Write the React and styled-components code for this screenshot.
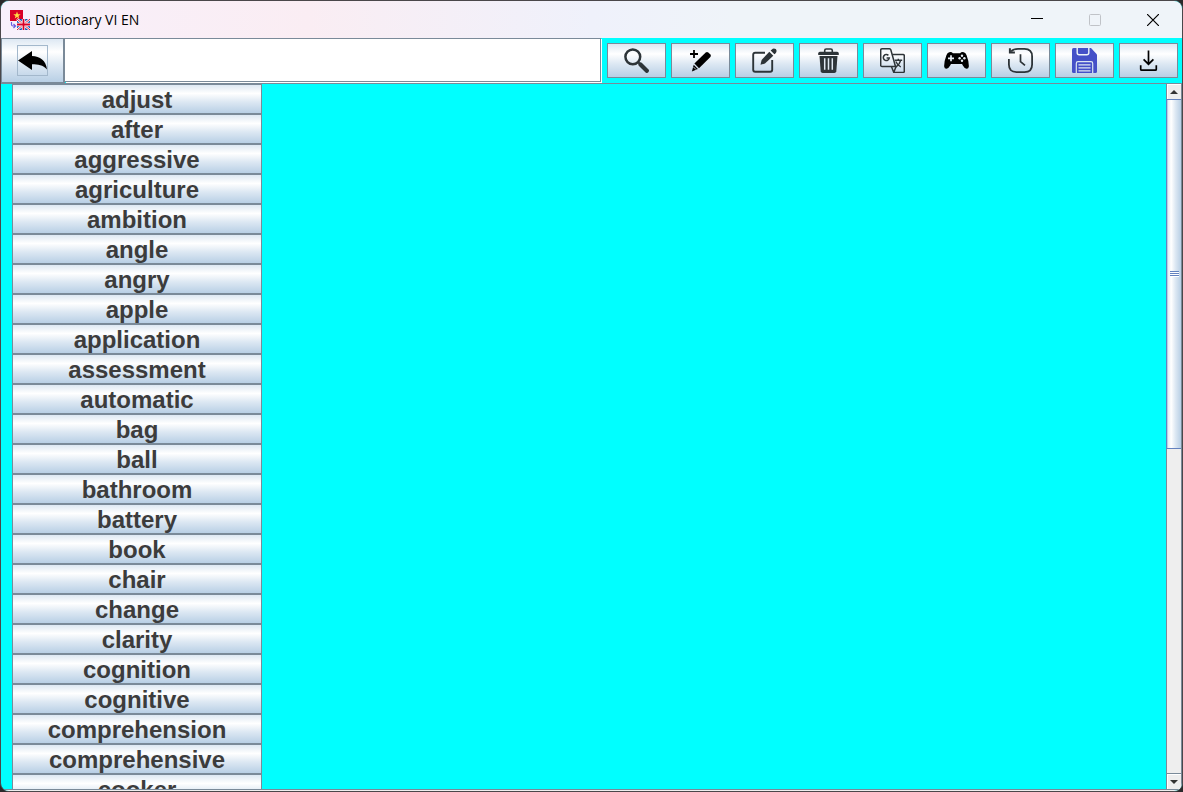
import React from "react";
import styled, { createGlobalStyle } from "styled-components";

const line = "#7a8a99";
const metal =
  "linear-gradient(#dde8f3 0%, #ffffff 30%, #dde8f3 60%, #b8cfe5 100%)";

const GlobalStyle = createGlobalStyle`
  *, *::before, *::after { box-sizing: border-box; }
  body { margin: 0; background: #2b2a2b; }
`;

const Window = styled.div`
  display: flex;
  flex-direction: column;
  height: 100vh;
  border: 1px solid #4a474a;
  border-radius: 9px;
  overflow: hidden;
  background: #00ffff;
  font-family: "Liberation Sans", Arial, sans-serif;
`;

const TitleBar = styled.header`
  display: flex;
  align-items: center;
  flex: none;
  height: 37px;
  padding-left: 9px;
  background: linear-gradient(90deg, #f8f0fb 0%, #faedf3 26%, #eff1fb 50%, #eff4f9 62%);
`;

const Title = styled.h1`
  flex: 1;
  margin: 0 0 0 5px;
  font: 400 14px/20px "Open Sans", "Noto Sans", sans-serif;
  color: #000;
`;

const WindowButton = styled.button`
  display: flex;
  align-items: center;
  justify-content: center;
  width: 58px;
  height: 37px;
  padding: 0;
  border: 0;
  background: none;
`;

const Toolbar = styled.div`
  display: flex;
  flex: none;
  height: 46px;
  border-bottom: 1px solid ${line};
`;

const BackButton = styled.button`
  display: flex;
  align-items: center;
  justify-content: center;
  flex: none;
  width: 64px;
  padding: 0;
  border: 1px solid ${line};
  border-right-width: 2px;
  background: ${metal};
`;

const FocusFrame = styled.span`
  display: flex;
  width: 31px;
  height: 31px;
  border: 1px solid #a3b8cc;
`;

const SearchInput = styled.input`
  flex: 1;
  min-width: 0;
  height: 44px;
  padding: 0 4px;
  border: 1px solid ${line};
  border-left: 0;
  outline: 0;
  background: #fff;
  box-shadow: 1px 1px #fff;
  font: 400 24px/28px "Liberation Sans", Arial, sans-serif;
`;

const Tools = styled.div`
  display: flex;
  flex: none;
  gap: 5px;
  padding: 5px 4px 5px 6px;
`;

const ToolButton = styled.button`
  display: flex;
  align-items: center;
  justify-content: center;
  width: 59px;
  height: 35px;
  padding: 0;
  border: 1px solid ${line};
  background: ${metal};
`;

const Content = styled.main`
  display: flex;
  flex: 1;
  min-height: 0;
  border-bottom: 1px solid #eee;
`;

const Viewport = styled.div`
  flex: 1;
  min-width: 0;
  overflow: hidden;
  padding-left: 11px;
  border-bottom: 1px solid ${line};
`;

const WordList = styled.ul`
  width: 250px;
  margin: 0;
  padding: 0;
  list-style: none;
`;

const WordButton = styled.button`
  display: block;
  width: 100%;
  height: 30px;
  padding: 2px 0 0;
  border: 1px solid ${line};
  background: ${metal};
  color: #3c3c3c;
  font: 700 24px/26px "Liberation Sans", Arial, sans-serif;
  text-align: center;
`;

const ScrollBar = styled.div`
  display: flex;
  flex-direction: column;
  flex: none;
  width: 16px;
  border: 1px solid ${line};
  border-top: 0;
  background: #eee;
`;

const ScrollArrow = styled.button`
  display: flex;
  align-items: center;
  justify-content: center;
  flex: none;
  height: ${(p) => (p.$down ? 16 : 15)}px;
  padding: 0;
  border: 0;
  border-top: ${(p) => (p.$down ? `1px solid ${line}` : "0")};
  background: #eee;
  box-shadow: inset 1px 1px #fff;
`;

const Track = styled.div`
  flex: 1;
  min-height: 0;
`;

const Thumb = styled.div`
  display: flex;
  align-items: center;
  justify-content: center;
  height: ${(p) => p.$size}%;
  border-top: 1px solid #6382bf;
  border-bottom: 1px solid #6382bf;
  box-shadow: -1px 0 #6382bf, inset 1px 0 #b8cfe5;
  background: linear-gradient(90deg, #dde8f3 0%, #ffffff 30%, #dde8f3 60%, #b8cfe5 100%);
`;

const Icon = ({ size = 25, children }) => (
  <svg width={size} height={size} viewBox={`0 0 ${size} ${size}`} fill="none" aria-hidden="true">
    {children}
  </svg>
);

const ink = "#2d3438";

const AppIcon = () => (
  <svg width="20" height="20" viewBox="0 0 20 20" aria-hidden="true">
    <rect width="13" height="11" fill="#d80027" />
    <path d="M7 1.600l1 2.600h2.700L8.500 5.900l.8 2.600L7 6.900 4.700 8.500l.8-2.600L3.300 4.200H6z" fill="#ffda44" />
    <path d="M1.500 12v2.500q0 1.500 1.500 1.500h2M3.500 14l2 2-2 2" fill="none" stroke="#6a5be0" strokeWidth="1.200" />
    <rect x="7" y="9" width="13" height="11" fill="#0052b4" />
    <path d="M7 9l13 11M20 9L7 20" stroke="#fff" strokeWidth="2.400" />
    <path d="M7 9l13 11M20 9L7 20" stroke="#d80027" strokeWidth=".9" />
    <path d="M13.500 9v11M7 14.500h13" stroke="#fff" strokeWidth="3.400" />
    <path d="M13.500 9v11M7 14.500h13" stroke="#d80027" strokeWidth="1.800" />
  </svg>
);

const BackIcon = () => (
  <svg width="29" height="29" viewBox="1 1 29 29" aria-hidden="true">
    <path d="M1 15.500L15 6v5c8 .5 14 4 15 13.500C26 20 21 19.300 15 19.300V25z" fill="#000" />
  </svg>
);

const SearchIcon = () => (
  <Icon>
    <circle cx="8.800" cy="8.800" r="7.400" stroke={ink} strokeWidth="2.500" />
    <path d="M14 14l3 3" stroke={ink} strokeWidth="2" />
    <path d="M16.500 16.500l6.300 6.300" stroke={ink} strokeWidth="4.200" strokeLinecap="round" />
  </Icon>
);

const AddIcon = () => (
  <Icon>
    <path d="M6 2v8M2 6h8" stroke="#000" strokeWidth="1.800" />
    <path d="M17.700 4.400q1.300-1 2.600 0l2.100 2.100q1 1.300 0 2.500L11 20.300l-4.600-4.700z" fill="#000" />
    <path d="M5.700 16.800l4.200 4.200-6 2.500z" fill="#000" />
    <path d="M5.500 19l2.600 2.600" stroke="#e4edf6" strokeWidth=".8" />
  </Icon>
);

const EditIcon = () => (
  <Icon>
    <path d="M13 4.700H3.200Q1.200 4.700 1.200 6.700v15q0 2 2 2h15q2 0 2-2V12" stroke={ink} strokeWidth="1.900" />
    <path d="M17.300 3.700l4 4-8.300 7.900-4.500 1.200 1.100-4.900z" fill={ink} />
    <path d="M19.600 1.700q2-2.200 4.200-.6 1.700 2.200-.4 4.300l-1 .9-3.800-3.700z" fill={ink} />
  </Icon>
);

const TrashIcon = () => (
  <Icon>
    <path d="M8.700 4.500V2.500Q8.700 1 10.200 1h4.600q1.500 0 1.500 1.500v2" stroke={ink} strokeWidth="1.600" />
    <path d="M2.200 7V5.500q0-1.700 1.700-1.700h17.200q1.700 0 1.700 1.700V7z" fill={ink} />
    <path d="M3.500 8h18l-1.200 15.200q-.2 1.800-2 1.800H6.700q-1.800 0-2-1.800z" fill={ink} />
    <path d="M8.700 10.300v11.500M12.500 10.300v11.500M16.300 10.300v11.500" stroke="#dfe8f1" strokeWidth="1.500" />
  </Icon>
);

const TranslateIcon = () => (
  <Icon>
    <path d="M2 .8h7.500q1 0 1.300 1l4.700 16.700H2q-1.300 0-1.300-1.300V2Q.7.800 2 .8z" stroke={ink} strokeWidth="1.500" />
    <path d="M12.300 6.500H23q1.300 0 1.300 1.300v15.400q0 1.300-1.300 1.300h-9.200l-2.300-5.700M13.800 24.300l2.200-5.500" stroke={ink} strokeWidth="1.500" />
    <path d="M8.400 7.400A3 3 0 1 0 9.300 10H6.600" stroke={ink} strokeWidth="1.500" />
    <path d="M14.700 12.200h7.500M18.300 10.700v1.500M20.700 12.200q-1 4.200-4.700 6.600M15.800 13.500q1.500 3.500 5 5.500" stroke={ink} strokeWidth="1.400" />
  </Icon>
);

const GameIcon = () => (
  <Icon>
    <path
      d="M5.200 4.300q2.200-.8 3.700.9h7.200q1.500-1.700 3.700-.9 2 .4 2.800 3 2.300 6 2.300 11-.3 2.600-2.400 2.500-1.800-.1-3.500-3.100l-1-1.700H7l-1 1.700q-1.700 3-3.500 3.100Q.4 20.900.1 18.300q0-5 2.300-11 .8-2.600 2.800-3z"
      fill="#000"
    />
    <path d="M7 7.300v6M4 10.300h6" stroke="#e8eff6" strokeWidth="1.700" />
    <g fill="#e8eff6">
      <circle cx="18" cy="7.800" r="1.200" />
      <circle cx="18" cy="12.700" r="1.200" />
      <circle cx="15.600" cy="10.300" r="1.200" />
      <circle cx="20.400" cy="10.300" r="1.200" />
    </g>
  </Icon>
);

const HistoryIcon = () => (
  <Icon>
    <path d="M3 3.500Q5.500.9 10 .9h6.500q7.600 0 7.600 7.600v8q0 7.600-7.600 7.600h-8q-7.600 0-7.600-7.600V11" stroke={ink} strokeWidth="1.800" />
    <path d="M1.900.2v4.400h5" stroke={ink} strokeWidth="2" />
    <path d="M12.500 6.300v7.300l4.500 3.700" stroke={ink} strokeWidth="1.700" />
  </Icon>
);

const SaveIcon = () => (
  <Icon>
    <path d="M1.500 0H19l6 6.500v17q0 1.500-1.500 1.500h-22Q0 25 0 23.500v-22Q0 0 1.500 0z" fill="#4550c8" />
    <path d="M5.200 0v4.700q0 2 2 2h7.600q2 0 2-2V0" stroke="#edf3f9" strokeWidth="1.400" />
    <path d="M4.300 25v-9.600q0-1.700 1.700-1.700h13q1.700 0 1.700 1.700V25M6.500 16.800h12M6.500 19.800h12M6.500 22.800h12" stroke="#dbe6f1" strokeWidth="1.200" />
  </Icon>
);

const DownloadIcon = () => (
  <Icon>
    <path d="M12.500 2.500v13.700M7.600 11.300l4.900 4.900 4.900-4.900" stroke="#000" strokeWidth="1.700" />
    <path d="M4.700 17.200v4q0 1 1 1h13.600q1 0 1-1v-4" stroke="#000" strokeWidth="1.700" />
  </Icon>
);

const tools = [
  ["Search", SearchIcon],
  ["Add word", AddIcon],
  ["Edit word", EditIcon],
  ["Delete word", TrashIcon],
  ["Translate", TranslateIcon],
  ["Games", GameIcon],
  ["History", HistoryIcon],
  ["Save", SaveIcon],
  ["Import", DownloadIcon],
];

const words = [
  "adjust", "after", "aggressive", "agriculture", "ambition", "angle",
  "angry", "apple", "application", "assessment", "automatic", "bag", "ball",
  "bathroom", "battery", "book", "chair", "change", "clarity", "cognition",
  "cognitive", "comprehension", "comprehensive", "cooker",
];

export default function App() {
  return (
    <>
      <GlobalStyle />
      <Window>
        <TitleBar>
          <AppIcon />
          <Title>Dictionary VI EN</Title>
          <WindowButton aria-label="Minimize">
            <svg width="12" height="12" viewBox="0 0 12 12" aria-hidden="true">
              <path d="M0 4.500h12" stroke="#000" />
            </svg>
          </WindowButton>
          <WindowButton aria-label="Maximize" disabled>
            <svg width="12" height="12" viewBox="0 0 12 12" aria-hidden="true">
              <rect x=".5" y=".5" width="11" height="11" rx="1" fill="none" stroke="#c0c3c8" />
            </svg>
          </WindowButton>
          <WindowButton aria-label="Close">
            <svg width="12" height="12" viewBox="0 0 12 12" aria-hidden="true">
              <path d="M0 0l12 12M12 0L0 12" stroke="#000" strokeWidth="1.200" />
            </svg>
          </WindowButton>
        </TitleBar>
        <Toolbar>
          <BackButton aria-label="Back">
            <FocusFrame>
              <BackIcon />
            </FocusFrame>
          </BackButton>
          <SearchInput type="text" aria-label="Search word" />
          <Tools>
            {tools.map(([label, Glyph]) => (
              <ToolButton key={label} aria-label={label}>
                <Glyph />
              </ToolButton>
            ))}
          </Tools>
        </Toolbar>
        <Content>
          <Viewport>
            <WordList>
              {words.map((word) => (
                <li key={word}>
                  <WordButton>{word}</WordButton>
                </li>
              ))}
            </WordList>
          </Viewport>
          <ScrollBar>
            <ScrollArrow aria-label="Scroll up">
              <svg width="8" height="4" viewBox="0 0 8 4" aria-hidden="true">
                <path d="M4 0l4 4H0z" fill="#333" />
              </svg>
            </ScrollArrow>
            <Track>
              <Thumb $size={52}>
                <svg width="9" height="6" viewBox="0 0 9 6" aria-hidden="true">
                  <path d="M1 1.500h8M1 3.500h8M1 5.500h8" stroke="#fff" />
                  <path d="M0 .5h9M0 2.500h9M0 4.500h9" stroke="#6382bf" />
                </svg>
              </Thumb>
            </Track>
            <ScrollArrow aria-label="Scroll down" $down>
              <svg width="8" height="4" viewBox="0 0 8 4" aria-hidden="true">
                <path d="M0 0h8L4 4z" fill="#333" />
              </svg>
            </ScrollArrow>
          </ScrollBar>
        </Content>
      </Window>
    </>
  );
}
